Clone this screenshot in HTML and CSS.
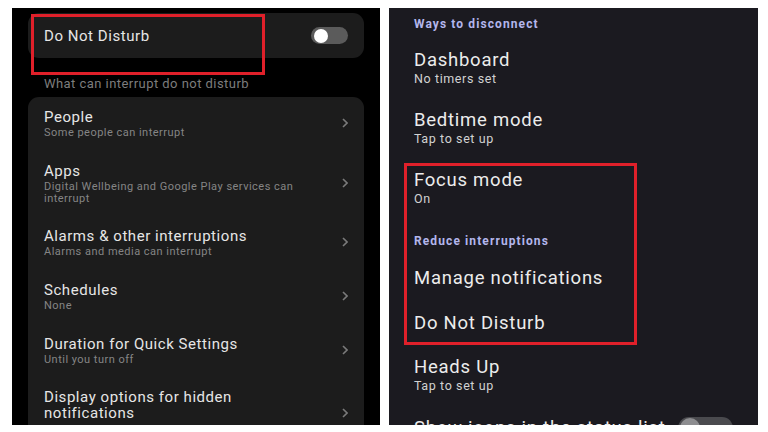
FILE: index.html
```html
<!DOCTYPE html>
<html>
<head>
<meta charset="utf-8">
<link rel="stylesheet" href="styles.css">
</head>
<body>
<div class="screen">
  <section class="panel left">
    <div class="card top-card">
      <span class="l-title">Do Not Disturb</span>
      <span class="toggle"><span class="thumb"></span></span>
    </div>
    <div class="caption">What can interrupt do not disturb</div>
    <div class="card list">
      <div class="l-row">
        <div class="l-text"><div class="l-title">People</div><div class="l-sub">Some people can interrupt</div></div>
        <svg class="chev" viewBox="0 0 6 10" width="6" height="10"><path d="M1 1 L5 5 L1 9" fill="none" stroke="#7a7a7a" stroke-width="1.6"/></svg>
      </div>
      <div class="l-row">
        <div class="l-text"><div class="l-title">Apps</div><div class="l-sub">Digital Wellbeing and Google Play services can<br>interrupt</div></div>
        <svg class="chev" viewBox="0 0 6 10" width="6" height="10"><path d="M1 1 L5 5 L1 9" fill="none" stroke="#7a7a7a" stroke-width="1.6"/></svg>
      </div>
      <div class="l-row">
        <div class="l-text"><div class="l-title">Alarms &amp; other interruptions</div><div class="l-sub">Alarms and media can interrupt</div></div>
        <svg class="chev" viewBox="0 0 6 10" width="6" height="10"><path d="M1 1 L5 5 L1 9" fill="none" stroke="#7a7a7a" stroke-width="1.6"/></svg>
      </div>
      <div class="l-row">
        <div class="l-text"><div class="l-title">Schedules</div><div class="l-sub">None</div></div>
        <svg class="chev" viewBox="0 0 6 10" width="6" height="10"><path d="M1 1 L5 5 L1 9" fill="none" stroke="#7a7a7a" stroke-width="1.6"/></svg>
      </div>
      <div class="l-row">
        <div class="l-text"><div class="l-title">Duration for Quick Settings</div><div class="l-sub">Until you turn off</div></div>
        <svg class="chev" viewBox="0 0 6 10" width="6" height="10"><path d="M1 1 L5 5 L1 9" fill="none" stroke="#7a7a7a" stroke-width="1.6"/></svg>
      </div>
      <div class="l-row last">
        <div class="l-text"><div class="l-title wrap">Display options for hidden<br>notifications</div></div>
        <svg class="chev" viewBox="0 0 6 10" width="6" height="10"><path d="M1 1 L5 5 L1 9" fill="none" stroke="#7a7a7a" stroke-width="1.6"/></svg>
      </div>
    </div>
    <div class="highlight hl-left"></div>
  </section>

  <section class="panel right">
    <div class="r-head first">Ways to disconnect</div>
    <div class="r-row"><div class="r-title">Dashboard</div><div class="r-sub">No timers set</div></div>
    <div class="r-row"><div class="r-title">Bedtime mode</div><div class="r-sub">Tap to set up</div></div>
    <div class="r-row"><div class="r-title">Focus mode</div><div class="r-sub">On</div></div>
    <div class="r-head">Reduce interruptions</div>
    <div class="r-row single"><div class="r-title">Manage notifications</div></div>
    <div class="r-row single"><div class="r-title">Do Not Disturb</div></div>
    <div class="r-row"><div class="r-title">Heads Up</div><div class="r-sub">Tap to set up</div></div>
    <div class="r-row single switch-row"><div class="r-title">Show icons in the status list</div><span class="toggle big"><span class="thumb"></span></span></div>
    <div class="highlight hl-right"></div>
  </section>
</div>
</body>
</html>
```
FILE: styles.css
```css
* { box-sizing: border-box; }
html, body { margin: 0; padding: 0; background: #ffffff; }
body { font-family: Roboto, "Liberation Sans", sans-serif; width: 768px; height: 432px; overflow: hidden; }

.screen {
  display: flex;
  gap: 9px;
  padding: 8px 0 0 12px;
}

.panel {
  position: relative;
  height: 417px;
  overflow: hidden;
}

.left {
  width: 368px;
  background: #000;
  padding: 5px 16px 0 16px;
}

.card {
  background: #1c1c1c;
  border-radius: 11px;
}

.top-card {
  height: 45px;
  display: flex;
  align-items: center;
  justify-content: space-between;
  padding: 0 16px;
}

.l-title {
  color: #e6e6e6;
  font-size: 15px;
  line-height: 20px;
  letter-spacing: 0.55px;
  white-space: nowrap;
}

.l-title.wrap { line-height: 15.5px; }

.l-sub {
  color: #858585;
  font-size: 11px;
  line-height: 11.5px;
  letter-spacing: 0.48px;
  white-space: nowrap;
}

.caption {
  color: #7d7d7d;
  font-size: 13px;
  line-height: 16px;
  letter-spacing: 0.45px;
  padding: 18px 0 0 16px;
  height: 39px;
}

.toggle {
  width: 37px;
  height: 17px;
  border-radius: 9px;
  background: #5b5b5b;
  display: flex;
  align-items: center;
  padding-left: 3px;
  flex: none;
}

.thumb {
  width: 14px;
  height: 14px;
  border-radius: 50%;
  background: #fff;
}

.list {
  height: 340px;
  border-radius: 11px 11px 0 0;
}

.l-row {
  display: flex;
  align-items: center;
  justify-content: space-between;
  padding: 10px 16px 12px 16px;
  min-height: 54px;
}

.l-row.last { padding-top: 12px; align-items: flex-start; }
.l-row.last .chev { margin-top: 18px; }

.l-text { width: 270px; }

.chev { flex: none; }

.right {
  width: 369px;
  background: #1b1a20;
  padding: 0 0 0 25px;
}

.r-head {
  color: #b3b6ec;
  font-size: 12px;
  font-weight: 700;
  line-height: 16px;
  letter-spacing: 1.1px;
  padding: 15px 0 6px 0;
}

.r-head.first { padding-top: 8px; }

.r-row {
  padding: 11px 0;
}

.r-row.single { padding: 11.5px 0; }

.r-title {
  color: #ececec;
  font-size: 18.5px;
  line-height: 22px;
  letter-spacing: 0.75px;
  white-space: nowrap;
}

.r-sub {
  color: #d2d2d2;
  font-size: 12.5px;
  line-height: 16px;
  letter-spacing: 0.6px;
}

.r-row.switch-row {
  display: flex;
  align-items: center;
  justify-content: space-between;
  padding-right: 25px;
}

.toggle.big {
  width: 55px;
  height: 22px;
  border-radius: 11px;
  background: #4a4a4e;
  padding-left: 2px;
}

.toggle.big .thumb {
  width: 20px;
  height: 20px;
  background: #8d8d90;
}

.highlight {
  position: absolute;
  border: 3px solid #e0202a;
  pointer-events: none;
}

.hl-left {
  left: 19px;
  top: 6px;
  width: 234px;
  height: 61px;
}

.hl-right {
  left: 15px;
  top: 155px;
  width: 233px;
  height: 182px;
}
```
